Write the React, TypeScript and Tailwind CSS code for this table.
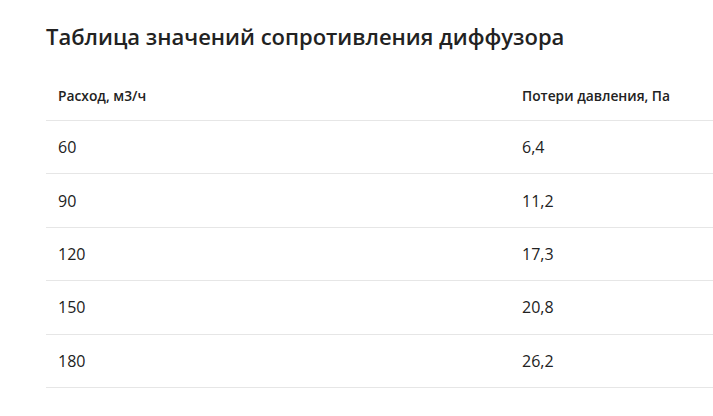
import React from 'react';

const rows = [
    ['60', '6,4'],
    ['90', '11,2'],
    ['120', '17,3'],
    ['150', '20,8'],
    ['180', '26,2'],
];

const App: React.FC = () => {
    return (
        <div className="w-full min-h-screen bg-white overflow-hidden text-[#222222]" style={{ fontFamily: '"Open Sans", sans-serif' }}>
            <div className="pl-[46px] pt-[20px]">
                <h2 className="text-[22px] leading-[32px] font-semibold whitespace-nowrap">Таблица значений сопротивления диффузора</h2>
                <table className="mt-[20px] w-[928px] border-collapse table-fixed">
                    <thead>
                        <tr className="border-b border-[#e6e6e6]">
                            <th className="w-1/2 text-left px-3 py-[14px] text-[13.8px] leading-[20px] font-semibold">Расход, м3/ч</th>
                            <th className="w-1/2 text-left px-3 py-[14px] text-[13.8px] leading-[20px] font-semibold">Потери давления, Па</th>
                        </tr>
                    </thead>
                    <tbody>
                        {rows.map(([flow, loss]) => (
                            <tr key={flow} className="border-b border-[#e6e6e6]">
                                <td className="px-3 py-[14.2px] text-[16px] leading-[24px]">{flow}</td>
                                <td className="px-3 py-[14.2px] text-[16px] leading-[24px]">{loss}</td>
                            </tr>
                        ))}
                    </tbody>
                </table>
            </div>
        </div>
    );
};

export default App;
